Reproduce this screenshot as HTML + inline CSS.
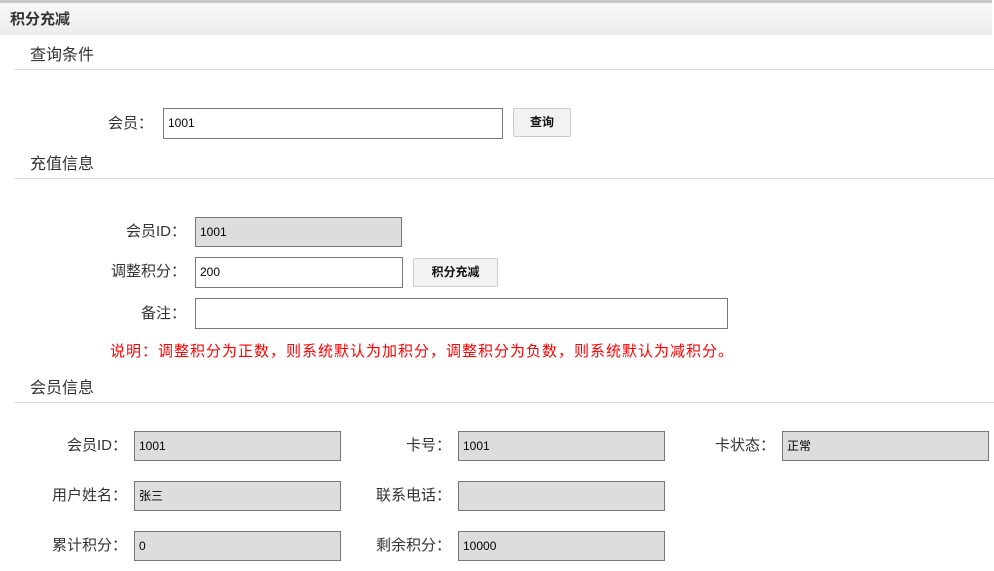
<!DOCTYPE html>
<html><head><meta charset="utf-8"><style>
body{margin:0;width:994px;height:571px;background:#fff;position:relative;overflow:hidden;font-family:"Liberation Sans","Noto Sans CJK SC",sans-serif;color:#333}
.hdr{position:absolute;left:0;top:0;width:992px;height:35px;border-top:3px solid #c8c8c8;box-sizing:border-box;background:linear-gradient(#f8f8f8,#ececec)}
.hdr span{position:absolute;left:10px;top:5px;font-size:15px;font-weight:bold;color:#333}
.sec{position:absolute;left:30px;font-size:16px;color:#333}
.line{position:absolute;left:14px;right:0;height:1px;background:#ddd}
.lbl{position:absolute;font-size:15px;color:#333;text-align:right;line-height:30px}
.in{position:absolute;box-sizing:border-box;border:1px solid #777;background:#fff;font-size:12px;padding-left:4px;line-height:28px;color:#000}
.g{background:#ddd}
.btn{position:absolute;box-sizing:border-box;border:1px solid #ccc;border-radius:2px;background:#f2f2f2;font-size:12px;font-weight:bold;text-align:center;color:#111}
.note{position:absolute;left:110px;top:341px;font-size:15px;letter-spacing:1px;color:#f00;line-height:22px;white-space:nowrap}
</style></head><body>
<div class="hdr"><span>积分充减</span></div>
<div class="sec" style="top:41px">查询条件</div>
<div class="line" style="top:69px"></div>
<div class="lbl" style="left:60px;width:93px;top:109px">会员：</div>
<div class="in" style="left:163px;top:108px;width:340px;height:31px">1001</div>
<div class="btn" style="left:513px;top:108px;width:58px;height:29px;line-height:27px">查询</div>

<div class="sec" style="top:150px">充值信息</div>
<div class="line" style="top:178px"></div>
<div class="lbl" style="left:80px;width:106px;top:217px">会员ID：</div>
<div class="in g" style="left:195px;top:217px;width:207px;height:30px">1001</div>
<div class="lbl" style="left:80px;width:106px;top:257px">调整积分：</div>
<div class="in" style="left:195px;top:257px;width:208px;height:31px">200</div>
<div class="btn" style="left:413px;top:258px;width:85px;height:29px;line-height:27px">积分充减</div>
<div class="lbl" style="left:80px;width:106px;top:299px">备注：</div>
<div class="in" style="left:195px;top:298px;width:533px;height:31px"></div>
<div class="note">说明：调整积分为正数，则系统默认为加积分，调整积分为负数，则系统默认为减积分。</div>

<div class="sec" style="top:374px">会员信息</div>
<div class="line" style="top:402px"></div>

<div class="lbl" style="left:20px;width:107px;top:431px">会员ID：</div>
<div class="in g" style="left:134px;top:431px;width:207px;height:30px">1001</div>
<div class="lbl" style="left:344px;width:107px;top:431px">卡号：</div>
<div class="in g" style="left:458px;top:431px;width:207px;height:30px">1001</div>
<div class="lbl" style="left:668px;width:107px;top:431px">卡状态：</div>
<div class="in g" style="left:782px;top:431px;width:207px;height:30px">正常</div>

<div class="lbl" style="left:20px;width:107px;top:481px">用户姓名：</div>
<div class="in g" style="left:134px;top:481px;width:207px;height:30px">张三</div>
<div class="lbl" style="left:344px;width:107px;top:481px">联系电话：</div>
<div class="in g" style="left:458px;top:481px;width:207px;height:30px"></div>

<div class="lbl" style="left:20px;width:107px;top:531px">累计积分：</div>
<div class="in g" style="left:134px;top:531px;width:207px;height:30px">0</div>
<div class="lbl" style="left:344px;width:107px;top:531px">剩余积分：</div>
<div class="in g" style="left:458px;top:531px;width:207px;height:30px">10000</div>
</body></html>
